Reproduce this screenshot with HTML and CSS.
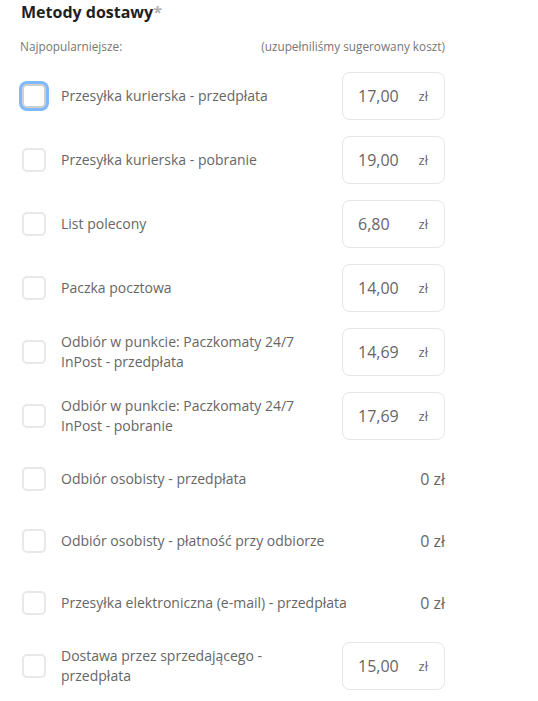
FILE: index.html
```
<!DOCTYPE html>
<html lang="pl">
<head>
<meta charset="utf-8">
<link rel="stylesheet" href="styles.css">
</head>
<body>
<div class="wrap">
  <h2 class="title">Metody dostawy<span class="req">*</span></h2>
  <div class="sub">
    <span>Najpopularniejsze:</span>
    <span>(uzupełniliśmy sugerowany koszt)</span>
  </div>
  <div class="list">
    <div class="row input-row">
      <span class="cb focus"></span>
      <span class="label">Przesyłka kurierska - przedpłata</span>
      <span class="price-box"><span class="num">17,00</span><span class="cur">zł</span></span>
    </div>
    <div class="row input-row">
      <span class="cb"></span>
      <span class="label">Przesyłka kurierska - pobranie</span>
      <span class="price-box"><span class="num">19,00</span><span class="cur">zł</span></span>
    </div>
    <div class="row input-row">
      <span class="cb"></span>
      <span class="label">List polecony</span>
      <span class="price-box"><span class="num">6,80</span><span class="cur">zł</span></span>
    </div>
    <div class="row input-row">
      <span class="cb"></span>
      <span class="label">Paczka pocztowa</span>
      <span class="price-box"><span class="num">14,00</span><span class="cur">zł</span></span>
    </div>
    <div class="row input-row">
      <span class="cb"></span>
      <span class="label">Odbiór w punkcie: Paczkomaty 24/7 InPost - przedpłata</span>
      <span class="price-box"><span class="num">14,69</span><span class="cur">zł</span></span>
    </div>
    <div class="row input-row">
      <span class="cb"></span>
      <span class="label">Odbiór w punkcie: Paczkomaty 24/7 InPost - pobranie</span>
      <span class="price-box"><span class="num">17,69</span><span class="cur">zł</span></span>
    </div>
    <div class="row text-row">
      <span class="cb"></span>
      <span class="label">Odbiór osobisty - przedpłata</span>
      <span class="price">0 zł</span>
    </div>
    <div class="row text-row">
      <span class="cb"></span>
      <span class="label">Odbiór osobisty - płatność przy odbiorze</span>
      <span class="price">0 zł</span>
    </div>
    <div class="row text-row">
      <span class="cb"></span>
      <span class="label">Przesyłka elektroniczna (e-mail) - przedpłata</span>
      <span class="price">0 zł</span>
    </div>
    <div class="row input-row">
      <span class="cb"></span>
      <span class="label">Dostawa przez sprzedającego - przedpłata</span>
      <span class="price-box"><span class="num">15,00</span><span class="cur">zł</span></span>
    </div>
  </div>
</div>
</body>
</html>
```
FILE: styles.css
```
html, body {
  margin: 0;
  padding: 0;
  background: #fff;
}
body {
  font-family: "Open Sans", "Noto Sans", sans-serif;
  color: #666;
}
.wrap {
  width: 424px;
  padding: 0 0 0 21px;
}
.title {
  margin: 0;
  font-size: 16px;
  line-height: 24px;
  font-weight: 700;
  color: #1f1f1f;
}
.req {
  color: #b0b0b0;
}
.sub {
  margin-top: 14px;
  margin-left: -1px;
  display: flex;
  justify-content: space-between;
  font-size: 11.8px;
  line-height: 16px;
  color: #777;
}
.list {
  margin-top: 18px;
  display: flex;
  flex-direction: column;
  gap: 16px;
}
.row {
  display: flex;
  align-items: center;
}
.input-row {
  min-height: 48px;
}
.text-row {
  min-height: 46px;
}
.cb {
  flex: none;
  box-sizing: border-box;
  width: 24px;
  height: 24px;
  margin-left: 1px;
  border: 2px solid #e8e8e8;
  border-radius: 5px;
  background: #fff;
}
.cb.focus {
  border-color: #cfcfcf;
  box-shadow: 0 0 0 3px #7db9fb;
}
.label {
  flex: 1;
  margin-left: 15px;
  padding-right: 12px;
  font-size: 14px;
  line-height: 20px;
  color: #666;
}
.input-row .label {
  max-width: 268px;
}
.price-box {
  flex: none;
  margin-left: auto;
  box-sizing: border-box;
  width: 103px;
  height: 48px;
  border: 1px solid #e6e6e6;
  border-radius: 8px;
  display: flex;
  align-items: center;
  justify-content: space-between;
  padding: 0 16px 0 15px;
}
.num {
  font-size: 16px;
  color: #666;
}
.cur {
  font-size: 13px;
  color: #666;
}
.price {
  flex: none;
  margin-left: auto;
  font-size: 16px;
  color: #666;
}
```
